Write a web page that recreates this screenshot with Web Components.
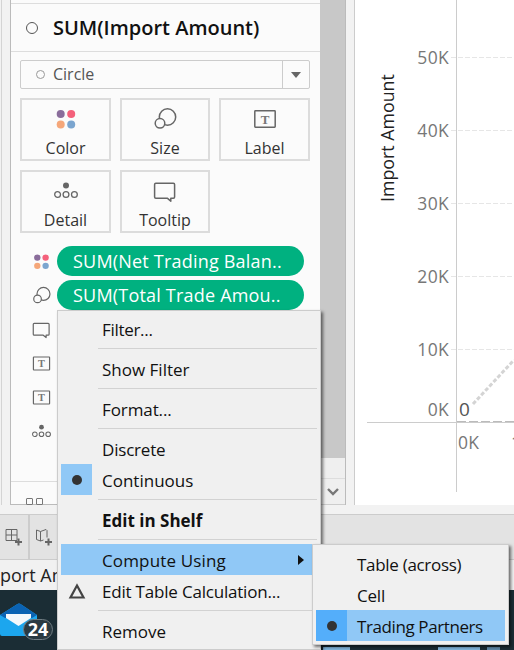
<!DOCTYPE html>
<html>
<head>
<meta charset="utf-8">
<style>
  html, body { margin: 0; padding: 0; }
  body { width: 514px; height: 650px; overflow: hidden; background: #f0f0f0; font-family: "Open Sans", sans-serif; }
  context-menu.main { left: 57px; top: 310px; width: 264px; }
  context-menu.sub { left: 312px; top: 544px; width: 197px; }
</style>
</head>
<body>
<app-shell>
  <marks-card slot="marks"></marks-card>
  <viz-chart slot="viz"></viz-chart>
  <context-menu class="main" slot="menus" pad="2">
    <menu-item style="letter-spacing:-.3px">Filter...</menu-item>
    <menu-sep></menu-sep>
    <menu-item>Show Filter</menu-item>
    <menu-sep></menu-sep>
    <menu-item style="letter-spacing:-.1px">Format...</menu-item>
    <menu-sep></menu-sep>
    <menu-item style="letter-spacing:-.2px">Discrete</menu-item>
    <menu-item checked>Continuous</menu-item>
    <menu-sep></menu-sep>
    <menu-item bold>Edit in Shelf</menu-item>
    <menu-sep></menu-sep>
    <menu-item active arrow style="letter-spacing:.15px">Compute Using</menu-item>
    <menu-item delta style="letter-spacing:-.2px">Edit Table Calculation...</menu-item>
    <menu-sep></menu-sep>
    <menu-item>Remove</menu-item>
  </context-menu>
  <context-menu class="sub" slot="menus" pad="3">
    <menu-item style="letter-spacing:-.3px">Table (across)</menu-item>
    <menu-item style="letter-spacing:-.2px">Cell</menu-item>
    <menu-item active checked style="letter-spacing:-.4px">Trading Partners</menu-item>
  </context-menu>
</app-shell>

<script>
const ICONS = {
  color: `<circle cx="6.7" cy="7" r="4" fill="#8a6d9b"/><circle cx="17.2" cy="7" r="4" fill="#f4617b"/>
          <circle cx="6.7" cy="17.5" r="4" fill="#f5a77a"/><circle cx="17.2" cy="17.5" r="4" fill="#7ba5cf"/>`,
  size: `<circle cx="14.500" cy="10" r="8.200" fill="none" stroke="#666" stroke-width="1.500"/>
         <circle cx="7" cy="16.300" r="4.800" fill="#fbfbfb" stroke="#666" stroke-width="1.500"/>`,
  label: `<rect x="1.8" y="3.8" width="20.4" height="16.4" rx=".6" fill="none" stroke="#666" stroke-width="1.5"/>
          <text x="12" y="17" text-anchor="middle" font-family="'Liberation Serif', serif" font-weight="700" font-size="13" fill="#777">T</text>`,
  detail: `<circle cx="12" cy="6.5" r="3" fill="#666"/><circle cx="3.6" cy="15.5" r="2.9" fill="none" stroke="#666" stroke-width="1.3"/>
           <circle cx="12" cy="15.5" r="2.9" fill="none" stroke="#666" stroke-width="1.3"/><circle cx="20.4" cy="15.5" r="2.9" fill="none" stroke="#666" stroke-width="1.3"/>`,
  tooltip: `<path d="M2.8 4.2h17.6a1.2 1.2 0 0 1 1.2 1.2v12.6a1.2 1.2 0 0 1-1.2 1.2h-2.6v3l-3.6-3H2.8a1.2 1.2 0 0 1-1.2-1.2V5.400a1.2 1.200 0 0 1 1.200-1.200z" fill="none" stroke="#666" stroke-width="1.5" stroke-linejoin="round"/>`
};

class MarkIcon extends HTMLElement {
  connectedCallback() {
    const size = this.getAttribute('size') || 24;
    this.attachShadow({ mode: 'open' }).innerHTML = `
      <style>:host { display: block; width: ${size}px; height: ${size}px; } svg { display: block; }</style>
      <svg width="${size}" height="${size}" viewBox="0 0 24 24">${ICONS[this.getAttribute('name')]}</svg>`;
  }
}
customElements.define('mark-icon', MarkIcon);

class MarkTile extends HTMLElement {
  connectedCallback() {
    this.attachShadow({ mode: 'open' }).innerHTML = `
      <style>
        :host { display: flex; flex-direction: column; align-items: center; box-sizing: border-box; height: 63px;
                border: 2px solid #dcdcdc; padding-top: 7px; color: #333; font: 16px/22px "Open Sans", sans-serif; }
        span { margin-top: 6px; }
      </style>
      <mark-icon name="${this.getAttribute('icon')}"></mark-icon>
      <span><slot></slot></span>`;
  }
}
customElements.define('mark-tile', MarkTile);

class MarkRow extends HTMLElement {
  connectedCallback() {
    const text = this.textContent.trim();
    this.attachShadow({ mode: 'open' }).innerHTML = `
      <style>
        :host { display: flex; align-items: center; height: 30px; gap: 6px; padding-left: 21px; }
        mark-icon { flex: none; }
        .pill { width: 247px; height: 30px; box-sizing: border-box; padding-left: 16px; border-radius: 15px; letter-spacing: .2px;
                background: #00b180; color: #fff; font: 18px/30px "Open Sans", sans-serif; white-space: nowrap; }
      </style>
      <mark-icon name="${this.getAttribute('icon')}" size="19"></mark-icon>
      ${text ? `<div class="pill"><slot></slot></div>` : ''}`;
  }
}
customElements.define('mark-row', MarkRow);

class MarksCard extends HTMLElement {
  constructor() {
    super();
    this.attachShadow({ mode: 'open' }).innerHTML = `
      <style>
        :host { display: flex; height: 505px; box-sizing: border-box; align-self: flex-start;
                border-left: 1px solid #d4d4d4; margin-left: 1px; width: 344px; padding-left: 8px; }
        .card { position: relative; flex: none; width: 310px; box-sizing: border-box; border-left: 1px solid #bbb; border-bottom: 1px solid #bbb;
                background: #fbfbfb; display: flex; flex-direction: column; padding-top: 3px; }
        .title { display: flex; align-items: center; height: 47px; border-top: 1px solid #ddd; border-bottom: 1px solid #ddd;
                 font: 600 20px "Open Sans", sans-serif; color: #111; padding-left: 15px; }
        .title i { width: 12px; height: 12px; border: 1.5px solid #555; border-radius: 50%; margin-right: 15px; box-sizing: border-box; }
        .mark-type { display: flex; align-items: center; margin: 8px 10px 0 9px; height: 29px; border: 1px solid #ccc; border-radius: 2px;
                     box-sizing: border-box; font: 16px "Open Sans", sans-serif; color: #555; padding-left: 15px; }
        .mark-type i { width: 9px; height: 9px; border: 1.5px solid #999; border-radius: 50%; margin-right: 8px; box-sizing: border-box; }
        .mark-type span { margin-bottom: 2px; }
        .mark-type b { margin-left: auto; width: 26px; height: 100%; border-left: 1px solid #ccc; display: flex; align-items: center; justify-content: center; }
        .mark-type b::after { content: ""; border: 5.500px solid transparent; border-top: 6px solid #666; border-bottom: 0; }
        .tiles { display: grid; grid-template-columns: 91px 90px 91px; gap: 9px; margin: 9px 0 0 9px; }
        .rows { display: flex; flex-direction: column; gap: 4px; margin-top: 13px; }
        .foot { position: absolute; left: 0; right: 0; top: 481px; bottom: 0; border-top: 1px solid #ddd; display: flex; gap: 3px; padding: 16px 0 0 15px; box-sizing: border-box; }
        .foot i { width: 5px; height: 5px; border: 1px solid #777; border-radius: 1px; }
        .foot i:last-child { margin-left: 13px; border-radius: 50%; }
        .bar { flex: none; width: 25px; display: flex; flex-direction: column; background: #efefef; border-right: 1px solid #bbb; box-sizing: content-box; }
        .thumb { height: 458px; background: #c8c8c8; }
        .down { margin-top: auto; height: 25px; border-top: 1px solid #ddd; border-bottom: 1px solid #ccc; display: flex; justify-content: center; align-items: center; }
      </style>
      <div class="card">
        <div class="title"><i></i>SUM(Import Amount)</div>
        <div class="mark-type"><i></i><span>Circle</span><b></b></div>
        <div class="tiles">
          <mark-tile icon="color">Color</mark-tile>
          <mark-tile icon="size">Size</mark-tile>
          <mark-tile icon="label">Label</mark-tile>
          <mark-tile icon="detail">Detail</mark-tile>
          <mark-tile icon="tooltip">Tooltip</mark-tile>
        </div>
        <div class="rows">
          <mark-row icon="color">SUM(Net Trading Balan..</mark-row>
          <mark-row icon="size">SUM(Total Trade Amou..</mark-row>
          <mark-row icon="tooltip"></mark-row>
          <mark-row icon="label"></mark-row>
          <mark-row icon="label"></mark-row>
          <mark-row icon="detail"></mark-row>
        </div>
        <div class="foot"><i></i><i></i><i></i></div>
      </div>
      <div class="bar">
        <div class="thumb"></div>
        <div class="down"><svg width="12" height="8" viewBox="0 0 12 8"><path d="M1 1l5 5 5-5" fill="none" stroke="#777" stroke-width="2.400"/></svg></div>
      </div>`;
  }
}
customElements.define('marks-card', MarksCard);

class VizChart extends HTMLElement {
  constructor() {
    super();
    const ticks = [['50K', 57.5], ['40K', 130.5], ['30K', 203.5], ['20K', 276.5], ['10K', 349.5]];
    this.attachShadow({ mode: 'open' }).innerHTML = `
      <style>
        :host { display: block; flex: none; width: 160px; height: 505px; box-sizing: border-box; border-left: 1px solid #ccc; margin-left: 9px; background: #fff; }
        svg { display: block; font-family: "Open Sans", sans-serif; }
        .t { font-size: 17.500px; letter-spacing: .3px; fill: #777; text-anchor: end; }
      </style>
      <svg width="159" height="505" viewBox="355 0 159 505">
        ${ticks.map(([l, y]) => `<line x1="451" x2="514" y1="${y}" y2="${y}" stroke="#e6e6e6" stroke-dasharray="5 2"/>
          <text class="t" x="449" y="${y + 6.5}">${l}</text>`).join('')}
        <text class="t" x="449" y="416">0K</text>
        <text x="458" y="449" font-size="17.500" letter-spacing=".3" fill="#777">0K</text>
        <text x="511" y="449" font-size="17.500" fill="#777">1</text>
        <text x="459" y="416" font-size="19" fill="#555">0</text>
        <text transform="translate(394 202) rotate(-90)" font-size="17.800" fill="#222">Import Amount</text>
        <line x1="456.500" x2="456.500" y1="0" y2="492" stroke="#ccc"/>
        <line x1="367" x2="514" y1="422.500" y2="422.500" stroke="#ccc"/>
        <line x1="457" x2="514" y1="421.500" y2="421.500" stroke="#bbb" stroke-dasharray="9 3"/>
        <line x1="473" x2="514" y1="404" y2="360" stroke="#d4d4d4" stroke-width="3" stroke-dasharray="4 2"/>
      </svg>`;
  }
}
customElements.define('viz-chart', VizChart);

class ContextMenu extends HTMLElement {
  connectedCallback() {
    this.attachShadow({ mode: 'open' }).innerHTML = `
      <style>
        :host { position: absolute; display: block; box-sizing: border-box; background: #f0f0f0; border: 1px solid #ccc;
                padding: ${this.getAttribute('pad')}px 3px 3px; box-shadow: 2px 2px 3px rgba(0,0,0,.55); }
      </style>
      <slot></slot>`;
  }
}
customElements.define('context-menu', ContextMenu);

class MenuItem extends HTMLElement {
  connectedCallback() {
    const checked = this.hasAttribute('checked');
    const active = this.hasAttribute('active');
    const mark = checked ? `<svg width="12" height="12"><circle cx="6" cy="6" r="5" fill="#333"/></svg>`
      : this.hasAttribute('delta') ? `<svg width="18" height="16" viewBox="0 0 18 16"><path d="M9 2.500L15.500 14.500H2.500z" fill="none" stroke="#444" stroke-width="2.200"/></svg>` : '';
    this.attachShadow({ mode: 'open' }).innerHTML = `
      <style>
        :host { display: flex; align-items: center; height: 31px; color: #111; position: relative;
                font: ${this.hasAttribute('bold') ? 700 : 400} 17px/31px "Open Sans", sans-serif; white-space: nowrap;
                background: ${active ? '#90c8f6' : 'transparent'}; }
        .check { flex: none; width: 31px; height: 31px; display: flex; align-items: center; justify-content: center; margin-right: 10px;
                 background: ${checked ? (active ? '#54aefa' : '#90c8f6') : 'transparent'}; }
        .text { margin-top: 2px; height: 29px; line-height: 29px; }
        .arrow { position: absolute; left: 237px; top: 11px; border: 5px solid transparent; border-left: 6px solid #111; border-right: 0; }
      </style>
      <div class="check">${mark}</div><span class="text"><slot></slot></span>
      ${this.hasAttribute('arrow') ? '<div class="arrow"></div>' : ''}`;
  }
}
customElements.define('menu-item', MenuItem);

class MenuSep extends HTMLElement {
  constructor() {
    super();
    this.attachShadow({ mode: 'open' }).innerHTML = `
      <style>
        :host { display: block; height: 9px; padding: 4px 0; box-sizing: border-box; margin-left: 37px; }
        div { height: 1px; background: #d2d2d2; }
      </style><div></div>`;
  }
}
customElements.define('menu-sep', MenuSep);

class MailBadge extends HTMLElement {
  constructor() {
    super();
    this.attachShadow({ mode: 'open' }).innerHTML = `
      <style>
        :host { display: block; position: relative; width: 54px; height: 40px; margin-top: 13px; }
        b { position: absolute; left: 23px; top: 16px; width: 30px; height: 21px; box-sizing: border-box; border: 1px solid #6f7c82; border-radius: 11px;
            background: #2a3a42; color: #fff; font: 700 18px/19px "Open Sans", sans-serif; text-align: center; }
      </style>
      <svg width="38" height="34" viewBox="0 0 38 34">
        <path d="M0 12L17.500 1q1.500-1 3 0L37 12v19a2 2 0 0 1-2 2H2a2 2 0 0 1-2-2z" fill="#1ca6ee"/>
        <path d="M0 12L17.500 1q1.500-1 3 0L37 12l-5 3H5z" fill="#0b63b3"/>
        <path d="M6 11h25v4L18.500 23 6 15z" fill="#f4f8fb"/>
      </svg>
      <b>24</b>`;
  }
}
customElements.define('mail-badge', MailBadge);

class AppShell extends HTMLElement {
  constructor() {
    super();
    this.attachShadow({ mode: 'open' }).innerHTML = `
      <style>
        :host { display: flex; flex-direction: column; position: relative; width: 514px; height: 650px; overflow: hidden; background: #f2f2f2; }
        .work { display: flex; height: 514px; flex: none; }
        .tools { display: flex; flex: none; height: 46px; box-sizing: border-box; background: #e3e3e3; border-top: 1px solid #ccc; border-bottom: 1px solid #ccc; }
        .tools div { width: 28px; border-right: 2px solid #ccc; display: flex; align-items: center; justify-content: center; }
        .tab { flex: none; height: 30px; font: 18px/30px "Open Sans", sans-serif; color: #222; background: #f1f1f1; overflow: hidden; white-space: nowrap; }
        .task { flex: 1; display: flex; align-items: flex-end; background: #1b2d35; }
        .task mail-badge { align-self: flex-start; margin-right: 269px; }
        .task i { height: 3px; background: #7fb4dc; }
      </style>
      <div class="work"><slot name="marks"></slot><slot name="viz"></slot></div>
      <div class="tools">
        <div><svg width="18" height="18" viewBox="0 0 18 18"><path d="M1 1.500h11v11H1zM1 7h11M6.500 1.500v11" fill="none" stroke="#666"/><path d="M10 14h7M13.500 10.500v7" stroke="#666" stroke-width="2"/></svg></div>
        <div><svg width="18" height="18" viewBox="0 0 18 18"><path d="M1.500 2l4 1.500L11 1.500l1 1v7M1.500 2v9.500l4 1.500 3-1M5.500 3.500V13" fill="none" stroke="#666"/><path d="M10 14h7M13.500 10.500v7" stroke="#666" stroke-width="2"/></svg></div>
      </div>
      <div class="tab">port Am</div>
      <div class="task">
        <mail-badge></mail-badge>
        <i style="width:27px"></i><i style="width:42px;margin-left:88px"></i><i style="width:13px;margin-left:7px;background:#5d88a8"></i>
      </div>
      <slot name="menus"></slot>`;
  }
}
customElements.define('app-shell', AppShell);
</script>
</body>
</html>
